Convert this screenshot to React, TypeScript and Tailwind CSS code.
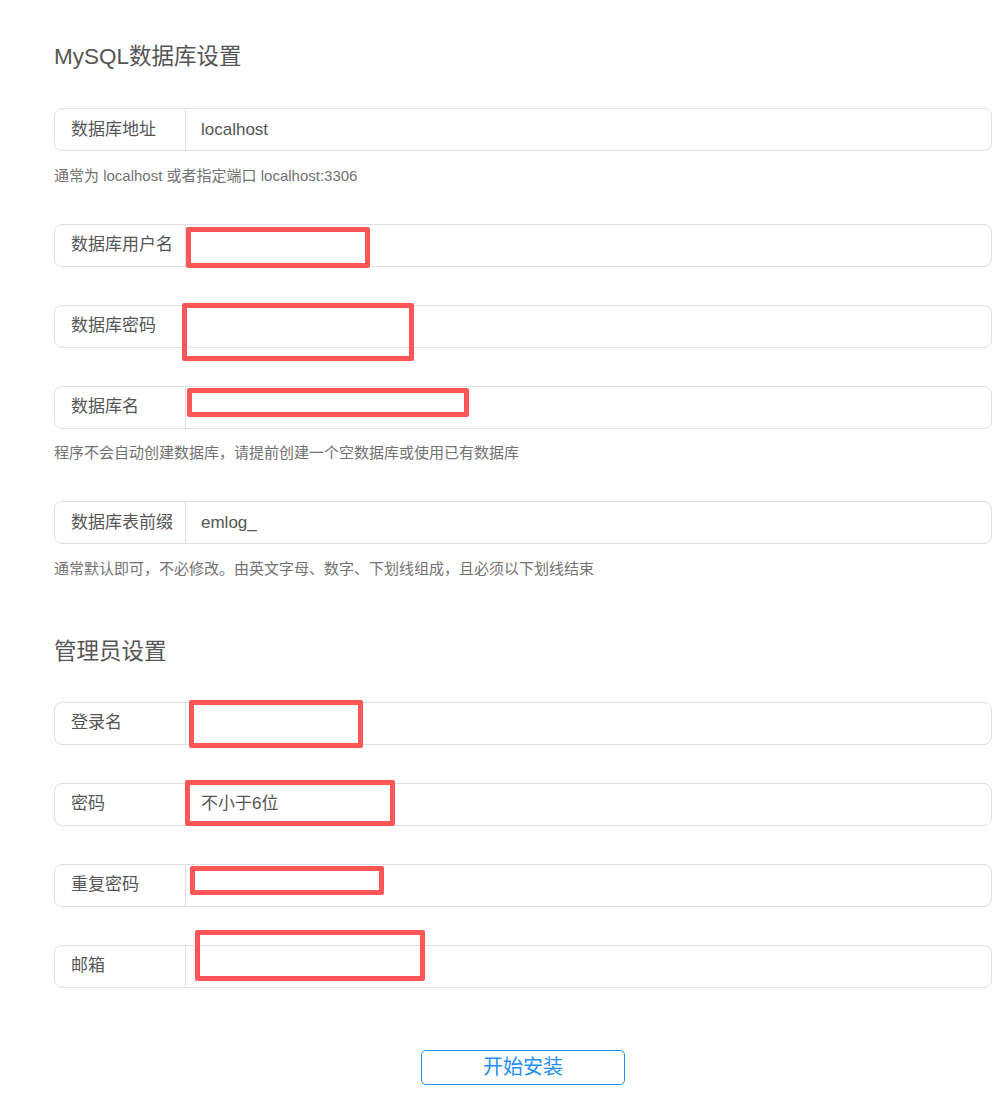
import React from "react";

type Field = {
  label: string;
  value?: string;
  placeholder?: string;
  help?: string;
};

const FONT = '"Liberation Sans", "Noto Sans CJK SC", sans-serif';

function Row({ f }: { f: Field }) {
  return (
    <div className="mb-[38px]">
      <div className="flex h-[43px] rounded-[8px] border border-[#dedfe3] bg-white">
        <div className="flex w-[131px] shrink-0 items-center border-r border-[#dedfe3] pl-4 text-[17px] text-[#555]">
          {f.label}
        </div>
        <input
          className="min-w-0 flex-1 rounded-r-[8px] bg-transparent pl-[15px] text-[17px] text-[#555] outline-none placeholder:text-[#555]"
          defaultValue={f.value}
          placeholder={f.placeholder}
        />
      </div>
      {f.help && (
        <div className="mt-[13.5px] text-[15px] leading-[21px] text-[#727272]">{f.help}</div>
      )}
    </div>
  );
}

const mysql: Field[] = [
  { label: "数据库地址", value: "localhost", help: "通常为 localhost 或者指定端口 localhost:3306" },
  { label: "数据库用户名" },
  { label: "数据库密码" },
  { label: "数据库名", help: "程序不会自动创建数据库，请提前创建一个空数据库或使用已有数据库" },
  { label: "数据库表前缀", value: "emlog_", help: "通常默认即可，不必修改。由英文字母、数字、下划线组成，且必须以下划线结束" },
];

const admin: Field[] = [
  { label: "登录名" },
  { label: "密码", placeholder: "不小于6位" },
  { label: "重复密码" },
  { label: "邮箱" },
];

const boxes = [
  { l: 186, t: 227, w: 184, h: 41 },
  { l: 182, t: 303, w: 232, h: 58 },
  { l: 187, t: 388, w: 282, h: 29 },
  { l: 189, t: 700, w: 174, h: 48 },
  { l: 185, t: 780, w: 210, h: 46 },
  { l: 190, t: 866, w: 194, h: 29 },
  { l: 195, t: 930, w: 230, h: 51 },
];

export default function App() {
  return (
    <div className="relative min-h-[1099px] w-[999px] bg-white" style={{ fontFamily: FONT }}>
      <div className="pl-[54px] pr-[7px] pt-[44px]">
        <h2 className="mb-[38px] text-[22.5px] leading-[26px] text-[#555]">MySQL数据库设置</h2>
        {mysql.map((f) => (
          <Row key={f.label} f={f} />
        ))}
        <h2 className="mb-[37px] mt-[60px] text-[22.5px] leading-[26px] text-[#555]">管理员设置</h2>
        {admin.map((f) => (
          <Row key={f.label} f={f} />
        ))}
        <div className="flex justify-center pt-[24px]">
          <button className="h-[35px] w-[204px] rounded-[5px] border border-[#1e8ff5] bg-white text-[20px] leading-none text-[#1e8ff5]">
            开始安装
          </button>
        </div>
      </div>
      {boxes.map((b, i) => (
        <div
          key={i}
          className="pointer-events-none absolute rounded-[2px] border-[5px] border-[#fd5656]"
          style={{ left: b.l, top: b.t, width: b.w, height: b.h }}
        />
      ))}
    </div>
  );
}
